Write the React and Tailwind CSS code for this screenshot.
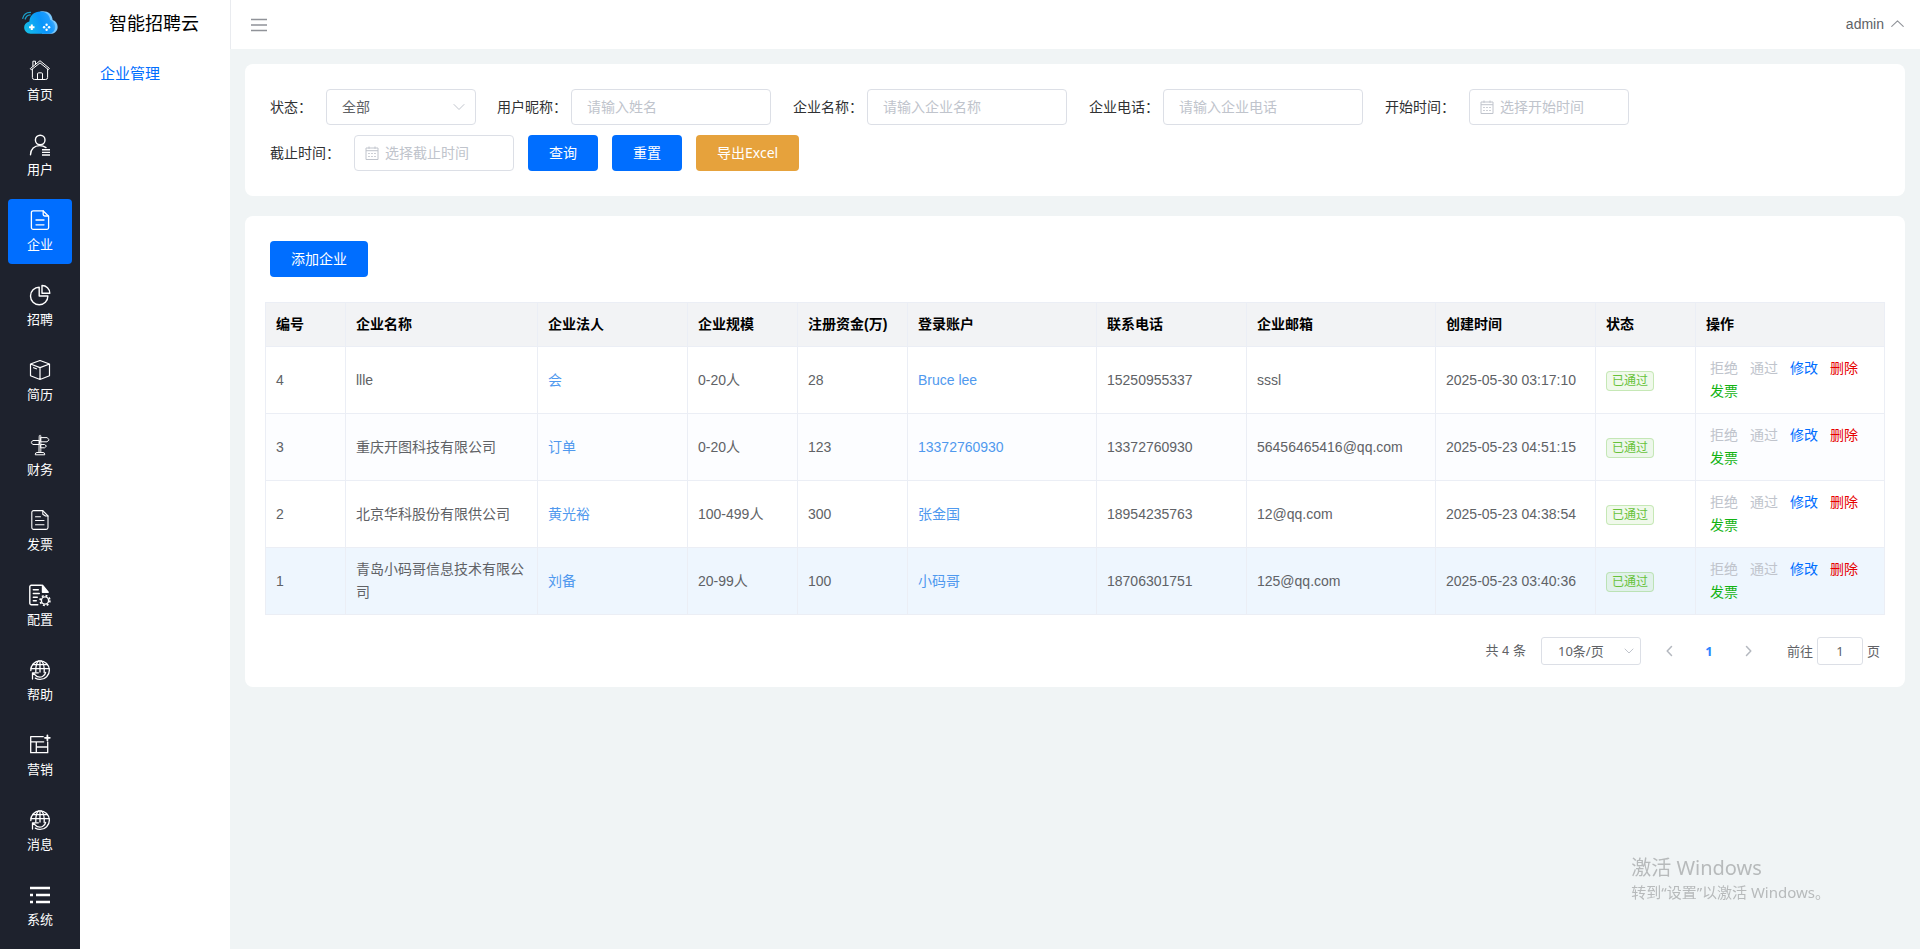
import { useState } from 'react';

// ── Iconos del menú lateral ───────────────────────────────────────────────
const Icon = ({ children, width = 1.2 }) => (
  <svg
    viewBox="0 0 20 20"
    className="w-5 h-5 overflow-visible"
    fill="none"
    stroke="currentColor"
    strokeWidth={width}
    strokeLinecap="round"
    strokeLinejoin="round"
    aria-hidden="true"
  >
    {children}
  </svg>
);

const HomeIcon = () => (
  <Icon width={1}>
    <path d="M.6 8.4 10 .7l9.4 7.7-1 1.2L10 2.9 1.6 9.600z" />
    <path d="M2.400 9.200v8.300a2 2 0 0 0 2 2h11.200a2 2 0 0 0 2-2V9.200" />
    <path d="M7.500 19.300v-5.300a1.200 1.200 0 0 1 1.200-1.200h2.600a1.200 1.200 0 0 1 1.200 1.200v5.300" />
    <path d="M2.900 6.300V1.200h2.600v3" />
  </Icon>
);

const UserIcon = () => (
  <Icon width={1.4}>
    <circle cx="10.200" cy="5" r="4.800" />
    <path d="M.5 19.800C.6 14 4.500 10.600 9.500 10.600c2.500 0 4.700.6 6.500 2" />
    <path strokeLinecap="butt" d="M12 14.800h8M12 17.400h8M12 20h8" />
  </Icon>
);

const DocIcon = () => (
  <Icon width={1.3}>
    <path d="M13 .8H3.200A1.800 1.800 0 0 0 1.400 2.600v15a1.800 1.800 0 0 0 1.800 1.800h13.600a1.800 1.800 0 0 0 1.800-1.800V6.200z" />
    <path d="M13.200 1v3.600c0 .9.5 1.400 1.400 1.400h3.800M6 10h8M6 14.800h8" />
  </Icon>
);

const PieIcon = () => (
  <Icon width={1.400}>
    <path d="M9.200 2.300a8.700 8.700 0 1 0 8.700 8.700H9.200z" />
    <path d="M12 .5a7.800 7.800 0 0 1 7.800 7.800H12z" />
  </Icon>
);

const BoxIcon = () => (
  <Icon width={1.200}>
    <path d="M10 .5 19.500 4v11.800L10 19.500.5 15.800V4zM.5 4 10 7.600 19.500 4M10 7.600v11.900M3.600 7.700l2.800 1.100" />
  </Icon>
);

const SignIcon = () => (
  <Icon width={1}>
    <path fill="currentColor" fillOpacity="0.500" strokeOpacity="0.600" d="M9 1.200a1 1 0 0 1 2 0v16.300H9z" />
    <path d="M11 2.600h6l2.200 2.100L17 6.800h-6zM9 5.500H3L.9 7.500 3 9.500h6zM11 9.500h3.500l2 1.600-2 1.700H11zM5.200 19.400a1.800 1.800 0 0 1 1.800-1.900h6a1.800 1.800 0 0 1 1.800 1.900z" />
  </Icon>
);

const InvoiceIcon = () => (
  <Icon width={1.100}>
    <path d="M12.800.6H3.600A1.800 1.800 0 0 0 1.800 2.400v15.200a1.800 1.800 0 0 0 1.800 1.800h12.600a1.800 1.800 0 0 0 1.800-1.800V6z" />
    <path d="M12.800.8v3.400L15.500 6H18M5.500 6.700h5M5.500 10.500h8.500M5.500 14.700h8.500" />
  </Icon>
);

const ConfigIcon = () => (
  <Icon width={1.400}>
    <path d="M11.500.3H1.300a1.500 1.500 0 0 0-1.500 1.500v16.400a1.500 1.500 0 0 0 1.500 1.500h6.500" />
    <path fill="currentColor" d="M12.500.3v6.900h5.700z" />
    <path d="M3.300 4.800h5M3.300 8.500h6M3.300 12.200h4M3.300 15.800h3" />
    <circle cx="15" cy="15.500" r="3.600" />
    <circle cx="15" cy="15.500" r="4.900" strokeWidth="1.700" strokeLinecap="butt" strokeDasharray="1.920 1.920" />
  </Icon>
);

const GlobeIcon = () => (
  <Icon width={1.300}>
    <path d="M.8 10.500A9.300 9.300 0 1 1 10 19.400c-1.800 0-3.400-.5-4.700-1.300" />
    <path d="M5.800 12C5.500 7 6.500 3 8.500.9M14.200 12.500C14.500 7 13.500 3 11.500.9M10 .8V12M1 8.600h18.200M2.600 4.600h14.800" />
    <path d="M2.500 19v-6.200h5.800M2.800 13.100l4.500 3.600c3.800 1.300 7.500-.4 8.300-4.200" />
  </Icon>
);

const MarketIcon = () => (
  <Icon width={1.300}>
    <path d="M13.200 1.700H.7v16h17V7M.7 6.800h13M6.300 6.800v10.900M6.300 12h11.400" />
    <path strokeWidth="1.800" d="M17.400.4v4.800M15 2.800h4.800" />
  </Icon>
);

const ListIcon = () => (
  <Icon width={2.600}>
    <path strokeLinecap="butt" d="M0 3h20M0 10h3M6 10h14M0 17h3M6 17h14" />
  </Icon>
);

const LogoIcon = () => (
  <svg viewBox="0 0 36 24" className="w-9 h-6" aria-hidden="true">
    <defs>
      <linearGradient id="cloud" x1="0" y1="0.600" x2="1" y2="0.300">
        <stop offset="0" stopColor="#14bbe8" />
        <stop offset="0.550" stopColor="#0a95fb" />
        <stop offset="0.800" stopColor="#1f9dfd" />
        <stop offset="1" stopColor="#5cb8fb" />
      </linearGradient>
    </defs>
    <path fill="#7cc8fb" d="M18 .7c7-1.500 12 2 12.700 8.300 7 2.200 6.800 13.300-2 13.800H20z" />
    <path
      fill="url(#cloud)"
      d="M8.500 22.800c-8-.5-8.500-11-1.200-12.300C8 4 12.500.6 18.200.6c5.300 0 9.300 3 10 8.200 6.500 2.200 7.300 13-1.200 14z"
    />
    <g fill="none" stroke="#1b9fc9" strokeWidth="1.300" strokeLinecap="round">
      <path d="M.7 7.300C1.600 3.500 4.500 1.200 8.500 1.300M3.200 8c.8-2.600 2.500-4 5-4.200" />
    </g>
    <path stroke="#fff" strokeWidth="2" d="M9.800 13.500v5.400M7.100 16.200h5.400" />
    <g fill="#fff">
      <circle cx="24.600" cy="13.700" r="1.200" />
      <circle cx="24.600" cy="18.700" r="1.200" />
      <circle cx="22.100" cy="16.200" r="1.200" />
      <circle cx="27.100" cy="16.200" r="1.200" />
    </g>
  </svg>
);

const Chevron = ({ d, className }) => (
  <svg viewBox="0 0 12 12" className={className} fill="none" stroke="currentColor" aria-hidden="true">
    <path d={d} strokeLinecap="round" strokeLinejoin="round" />
  </svg>
);

const CalendarIcon = () => (
  <svg viewBox="0 0 14 14" className="w-[14px] h-[14px] shrink-0" fill="none" stroke="currentColor" aria-hidden="true">
    <path d="M1 2h12v11.500H1zM1 4.700h12M4 .5v2.300M10 .5v2.300M3.200 7.500h1.600M6.200 7.500h1.600M9.200 7.500h1.600M3.200 10.500h1.600M6.200 10.500h1.600M9.200 10.500h1.600" />
  </svg>
);

// ── Datos ─────────────────────────────────────────────────────────────────
const menu = [
  { label: '首页', icon: HomeIcon },
  { label: '用户', icon: UserIcon },
  { label: '企业', icon: DocIcon },
  { label: '招聘', icon: PieIcon },
  { label: '简历', icon: BoxIcon },
  { label: '财务', icon: SignIcon },
  { label: '发票', icon: InvoiceIcon },
  { label: '配置', icon: ConfigIcon },
  { label: '帮助', icon: GlobeIcon },
  { label: '营销', icon: MarketIcon },
  { label: '消息', icon: GlobeIcon },
  { label: '系统', icon: ListIcon },
];

const columns = [
  { title: '编号', width: 'w-[80px]' },
  { title: '企业名称', width: 'w-[192px]' },
  { title: '企业法人', width: 'w-[150px]' },
  { title: '企业规模', width: 'w-[110px]' },
  { title: '注册资金(万)', width: 'w-[110px]' },
  { title: '登录账户', width: 'w-[189px]' },
  { title: '联系电话', width: 'w-[150px]' },
  { title: '企业邮箱', width: 'w-[189px]' },
  { title: '创建时间', width: 'w-[160px]' },
  { title: '状态', width: 'w-[100px]' },
  { title: '操作', width: 'w-[189px]' },
];

const rows = [
  { id: 4, name: 'llle', legal: '会', size: '0-20人', capital: 28, account: 'Bruce lee', phone: '15250955337', email: 'sssl', created: '2025-05-30 03:17:10' },
  { id: 3, name: '重庆开图科技有限公司', legal: '订单', size: '0-20人', capital: 123, account: '13372760930', phone: '13372760930', email: '56456465416@qq.com', created: '2025-05-23 04:51:15' },
  { id: 2, name: '北京华科股份有限供公司', legal: '黄光裕', size: '100-499人', capital: 300, account: '张金国', phone: '18954235763', email: '12@qq.com', created: '2025-05-23 04:38:54' },
  { id: 1, name: '青岛小码哥信息技术有限公司', legal: '刘备', size: '20-99人', capital: 100, account: '小码哥', phone: '18706301751', email: '125@qq.com', created: '2025-05-23 03:40:36' },
];

const rowBg = ['bg-white', 'bg-[#fcfdff]', 'bg-white', 'bg-[#eef6fe]'];

// ── Campos del formulario ─────────────────────────────────────────────────
const TextField = ({ id, label, placeholder }) => (
  <div className="flex items-center gap-1 mr-[22px]">
    <label htmlFor={id}>{label}：</label>
    <input
      id={id}
      type="text"
      placeholder={placeholder}
      className="w-[200px] h-9 px-[15px] rounded border border-[#dcdfe6] text-[#606266] placeholder:text-[#c0c4cc] focus:outline-none focus:border-[#006eff]"
    />
  </div>
);

const DateField = ({ id, label, placeholder }) => (
  <div className="flex items-center gap-[14px] mr-[14px]">
    <label htmlFor={id}>{label}：</label>
    <div className="flex items-center gap-1.5 w-[160px] h-9 px-2.5 rounded border border-[#dcdfe6] text-[#c0c4cc]">
      <CalendarIcon />
      <input
        id={id}
        type="text"
        placeholder={placeholder}
        className="w-full min-w-0 text-[#606266] placeholder:text-[#c0c4cc] focus:outline-none"
      />
    </div>
  </div>
);

const Button = ({ children, className = 'bg-[#006eff]' }) => (
  <button type="button" className={`h-9 px-[21px] rounded text-white font-['Noto_Sans','Noto_Sans_CJK_SC',sans-serif] ${className}`}>
    {children}
  </button>
);

const App = () => {
  const [active, setActive] = useState('企业');
  const [page, setPage] = useState('1');

  return (
    <div className="flex min-h-screen bg-[#f0f4f5] text-sm text-[#303133] font-['Liberation_Sans','Noto_Sans_CJK_SC',sans-serif]">

      {/* ── Menú principal ─────────────────────────────────────────────── */}
      <aside className="w-20 shrink-0 bg-[#1e222d] text-white">
        <div className="flex justify-center items-center h-[49px] pb-1">
          <LogoIcon />
        </div>
        <nav className="flex flex-col gap-2.5 px-2 pb-2.5">
          {menu.map(({ label, icon: MenuIcon }) => (
            <button
              key={label}
              type="button"
              onClick={() => setActive(label)}
              className={`flex flex-col items-center gap-[5px] pt-[11px] pb-[9px] rounded text-[13px] leading-5 ${
                active === label ? 'bg-[#006eff]' : ''
              }`}
            >
              <MenuIcon />
              <span>{label}</span>
            </button>
          ))}
        </nav>
      </aside>

      {/* ── Submenú ────────────────────────────────────────────────────── */}
      <aside className="w-[150px] shrink-0 bg-white">
        <h1 className="h-[49px] pr-0.5 text-lg leading-[49px] text-center text-black">智能招聘云</h1>
        <a href="#companies" className="block px-5 text-[15px] leading-[50px] text-[#006eff]">企业管理</a>
      </aside>

      <div className="flex-1 min-w-0">
        <header className="flex items-center justify-between h-[49px] pl-5 pr-4 bg-white border-l border-[#e9ebef]">
          <button type="button" aria-label="折叠菜单" className="text-[#909399]">
            <svg viewBox="0 0 16 14" className="w-4 h-[14px]" stroke="currentColor" aria-hidden="true">
              <path d="M0 1.500h16M0 7h16M0 12.500h16" strokeWidth="1.300" />
            </svg>
          </button>
          <button type="button" className="flex items-center gap-[7px] pb-0.5 text-[#606266]">
            admin
            <Chevron d="M.7 8.700 6 3.500l5.300 5.200" className="w-[13px] h-[13px] text-[#909399]" />
          </button>
        </header>

        <main className="pt-[15px] px-[15px]">

          {/* ── Filtros ──────────────────────────────────────────────── */}
          <form className="flex flex-wrap gap-y-2.5 p-[25px] bg-white rounded-lg">
            <div className="flex items-center gap-[14px] mr-[21px]">
              <label htmlFor="status">状态：</label>
              <div className="relative">
                <select
                  id="status"
                  className="w-[150px] h-9 pl-[15px] pr-8 rounded border border-[#dcdfe6] bg-white text-[#606266] appearance-none"
                >
                  <option>全部</option>
                </select>
                <Chevron d="M1 3.500 6 8.500l5-5" className="absolute right-[11px] top-3 w-3 h-3 text-[#c0c4cc] pointer-events-none" />
              </div>
            </div>
            <TextField id="nickname" label="用户昵称" placeholder="请输入姓名" />
            <TextField id="company" label="企业名称" placeholder="请输入企业名称" />
            <TextField id="phone" label="企业电话" placeholder="请输入企业电话" />
            <DateField id="start" label="开始时间" placeholder="选择开始时间" />
            <DateField id="end" label="截止时间" placeholder="选择截止时间" />
            <div className="flex gap-[14px]">
              <Button>查询</Button>
              <Button>重置</Button>
              <Button className="bg-[#e6a23c]">导出Excel</Button>
            </div>
          </form>

          {/* ── Listado de empresas ──────────────────────────────────── */}
          <section className="mt-5 px-5 pt-[25px] pb-[22px] bg-white rounded-lg">
            <div className="pl-[5px] mb-[25px]">
              <Button>添加企业</Button>
            </div>

            <table className="w-full table-fixed border-separate border-spacing-0 border-t border-l border-[#ebeef5] text-left leading-[23px] text-[#606266]">
              <thead className="bg-[#f2f3f5] text-black">
                <tr>
                  {columns.map(col => (
                    <th key={col.title} className={`p-2.5 border-r border-b border-[#ebeef5] font-bold whitespace-nowrap ${col.width}`}>
                      {col.title}
                    </th>
                  ))}
                </tr>
              </thead>
              <tbody className="[&_td]:p-2.5 [&_td]:border-r [&_td]:border-b [&_td]:border-[#ebeef5]">
                {rows.map((row, i) => (
                  <tr key={row.id} className={rowBg[i]}>
                    <td>{row.id}</td>
                    <td>{row.name}</td>
                    <td><a href="#legal" className="text-[#5099ee]">{row.legal}</a></td>
                    <td>{row.size}</td>
                    <td>{row.capital}</td>
                    <td><a href="#account" className="text-[#5099ee]">{row.account}</a></td>
                    <td>{row.phone}</td>
                    <td>{row.email}</td>
                    <td>{row.created}</td>
                    <td>
                      <span className="inline-block px-[5px] rounded border border-[#67c23a]/30 bg-[#67c23a]/10 text-xs leading-[18px] text-[#67c23a] align-middle">
                        已通过
                      </span>
                    </td>
                    <td>
                      <div className="flex flex-wrap gap-x-3 pl-1">
                        <button type="button" disabled className="text-[#c0c4cc]">拒绝</button>
                        <button type="button" disabled className="text-[#c0c4cc]">通过</button>
                        <button type="button" className="text-[#006eff]">修改</button>
                        <button type="button" className="text-[#e60000]">删除</button>
                        <button type="button" className="text-[#13b313]">发票</button>
                      </div>
                    </td>
                  </tr>
                ))}
              </tbody>
            </table>

            {/* Paginación */}
            <div className="flex items-center justify-end mt-[22px] pr-[5px] text-[13px] text-[#606266] font-['Noto_Sans','Noto_Sans_CJK_SC',sans-serif]">
              <span className="mr-[15px] font-['Liberation_Sans','Noto_Sans_CJK_SC',sans-serif]">共 4 条</span>
              <div className="relative mr-6">
                <select
                  aria-label="每页条数"
                  className="w-[100px] h-7 pl-4 rounded-[3px] border border-[#dcdfe6] bg-white appearance-none"
                >
                  <option>10条/页</option>
                </select>
                <Chevron d="M2 4l4 4 4-4" className="absolute right-1.5 top-2 w-3 h-3 text-[#c0c4cc] pointer-events-none" />
              </div>
              <button type="button" aria-label="上一页" className="text-[#b4b8bf]">
                <Chevron d="M6.500 1.500 2.200 6l4.300 4.500" className="w-3 h-3 stroke-[1.500px]" />
              </button>
              <button type="button" className="w-16 text-[#2b85ff] font-bold">1</button>
              <button type="button" aria-label="下一页" className="mr-[34px] text-[#b4b8bf]">
                <Chevron d="M5.500 1.500 9.800 6l-4.300 4.500" className="w-3 h-3 stroke-[1.500px]" />
              </button>
              <label htmlFor="page">前往</label>
              <input
                id="page"
                type="text"
                value={page}
                onChange={e => setPage(e.target.value)}
                className="w-[46px] h-7 mx-1 rounded-[3px] border border-[#dcdfe6] text-center focus:outline-none"
              />
              <span>页</span>
            </div>
          </section>
        </main>
      </div>

      {/* ── Aviso de activación ────────────────────────────────────────── */}
      <div className="fixed right-[90px] bottom-[46px] text-[#b7babb] font-['Noto_Sans','Noto_Sans_CJK_SC',sans-serif] pointer-events-none">
        <p className="text-xl leading-[26px]">激活 Windows</p>
        <p className="text-[15px] leading-[22px]">转到“设置”以激活 Windows。</p>
      </div>
    </div>
  );
};

export default App;
